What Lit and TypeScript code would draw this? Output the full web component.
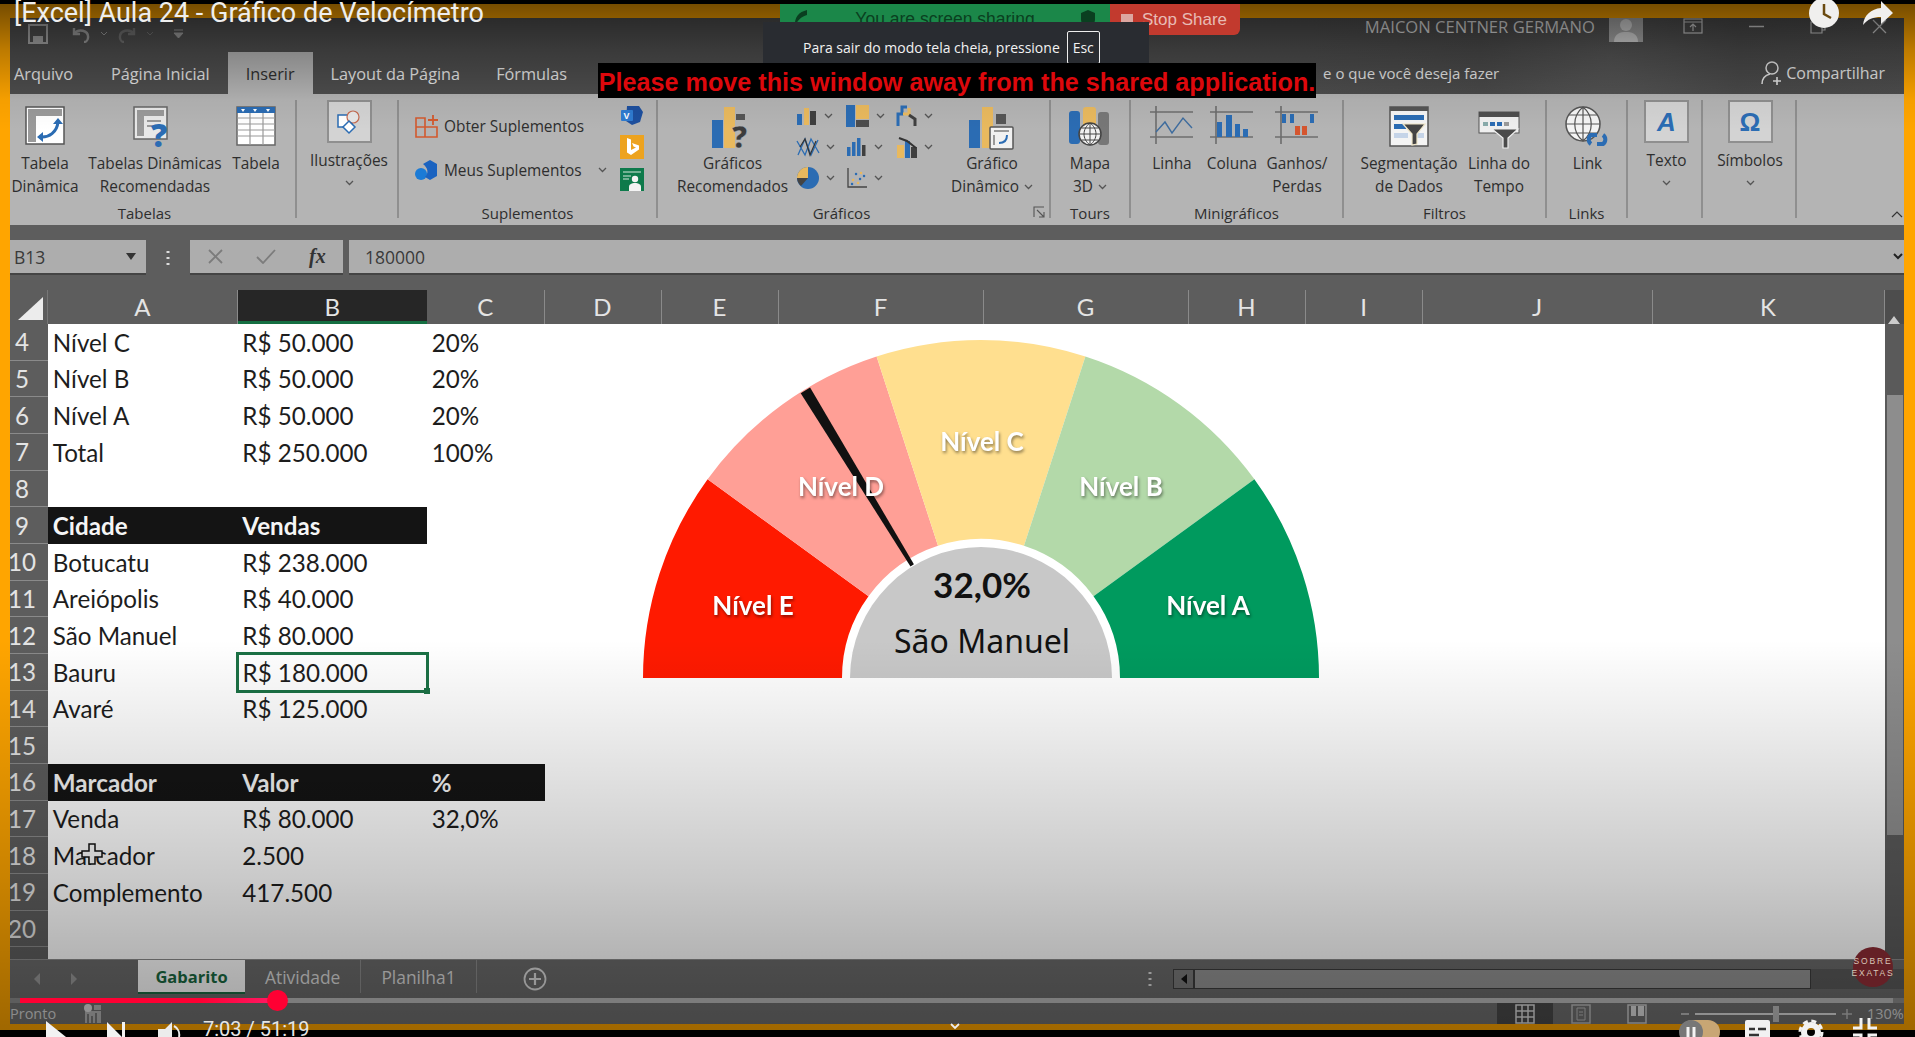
import { LitElement, html, css, svg } from "lit";
import { customElement } from "lit/decorators.js";

const BLUE = "#2b6cb3";
const YEL = "#e9b95e";

const ic = (w: number, h: number, c: unknown) =>
  html`<svg width=${w} height=${h} viewBox="0 0 ${w} ${h}" fill="none">${c}</svg>`;

const pivotIcon = ic(40, 40, svg`
  <rect x="1" y="1" width="38" height="37" fill="#fff" stroke="#555" stroke-width="1.5"/>
  <rect x="3" y="3" width="34" height="7" fill="#9a9a9a"/><rect x="3" y="3" width="8" height="33" fill="#9a9a9a"/>
  <path d="M15 31c9 1 17-5 18-15" stroke="${BLUE}" stroke-width="3"/>
  <path d="M28 18l5-6 5 6zM18 26l-6 5 6 5z" fill="${BLUE}"/>`);
const recIcon = ic(44, 44, svg`
  <rect x="1" y="1" width="33" height="32" fill="#e8e8e8" stroke="#666" stroke-width="1.5"/>
  <rect x="4" y="4" width="27" height="6" fill="#999"/><rect x="4" y="4" width="7" height="26" fill="#999"/>
  <rect x="14" y="14" width="14" height="2" fill="#999"/><rect x="14" y="19" width="14" height="2" fill="#999"/>
  <text x="18" y="41" font-family="Open Sans" font-weight="800" font-size="32" fill="${BLUE}">?</text>`);
const tableIcon = ic(40, 40, svg`
  <rect x="1" y="1" width="38" height="38" fill="#fff" stroke="#666" stroke-width="1.5"/>
  <rect x="1" y="1" width="38" height="6" fill="${BLUE}"/>
  <path d="M5 3h4l-2 3zM17 3h4l-2 3zM30 3h4l-2 3z" fill="#fff"/>
  <path d="M1 12h38M1 18h38M1 24h38M1 30h38M14 7v32M27 7v32" stroke="#9a9a9a" stroke-width="1.2"/>`);
const illusIcon = ic(26, 26, svg`
  <rect x="2" y="6" width="14" height="12" fill="#fff" stroke="${BLUE}" stroke-width="1.5"/>
  <circle cx="17" cy="8" r="6" fill="#e6e6e6" stroke="#c46a50" stroke-width="1.2"/>
  <path d="M13 12l6 6-6 6-6-6z" fill="#fff" stroke="${BLUE}" stroke-width="1.5"/>`);
const obterIcon = ic(24, 24, svg`
  <path d="M1 4h9v9H1zM1 13h9v10H1zM10 13h12v10H10z" stroke="#d2592e" stroke-width="1.6"/>
  <path d="M18 1v10M13 6h10" stroke="#d2592e" stroke-width="1.8"/>`);
const meusIcon = ic(24, 22, svg`
  <circle cx="6" cy="15" r="6" fill="#1b7bd6"/><path d="M8 5l7-4 7 4v12l-7 4-5-3c4-4 3-9-2-13z" fill="#1b63c0"/>`);
const visioIcon = ic(24, 22, svg`
  <path d="M7 2h12l4 6-3 10-8 3-6-4z" fill="#1d4f9e"/><rect x="1" y="6" width="12" height="11" rx="1" fill="#2f7bd0"/>
  <text x="3.5" y="15" font-family="Liberation Sans" font-weight="700" font-size="9" fill="#fff">V</text>`);
const bingIcon = ic(24, 24, svg`
  <rect width="24" height="24" fill="#eda31f"/><path d="M7 3l4 1.5V15l5-2.5-2.5-1-1.5-3.5 7 2.5v4L11 20l-4-2.5z" fill="#fff"/>`);
const peopleIcon = ic(24, 23, svg`
  <rect width="24" height="23" fill="#0e7a4b"/><path d="M3 4h18M3 8h8M3 11h6" stroke="#d6e6dc" stroke-width="1.2"/>
  <circle cx="15" cy="11" r="3.2" fill="#f3f3f3"/><path d="M9 23v-4c0-3 3-4 6-4s6 1 6 4v4z" fill="#f3f3f3"/>`);
const recChartIcon = ic(42, 44, svg`
  <rect x="0" y="14" width="11" height="28" fill="${BLUE}"/><rect x="12" y="1" width="11" height="41" fill="${YEL}"/>
  <rect x="24" y="8" width="9" height="6" fill="#555"/>
  <text x="20" y="42" font-family="Open Sans" font-weight="800" font-size="30" fill="#3c3c3c" stroke="#bbb" stroke-width=".4">?</text>`);
const pivotChartIcon = ic(46, 44, svg`
  <rect x="0" y="14" width="11" height="28" fill="${BLUE}"/><rect x="13" y="1" width="11" height="41" fill="${YEL}"/>
  <rect x="27" y="8" width="10" height="10" fill="#555"/>
  <rect x="21" y="21" width="23" height="22" rx="1" fill="#f1f1f1" stroke="#555" stroke-width="1.5"/>
  <path d="M25 25h15M25 29v10" stroke="#999" stroke-width="2"/><path d="M30 37c5 0 8-3 8-8" stroke="${BLUE}" stroke-width="2"/>`);
const chartSmall = [
  ic(22, 22, svg`<rect x="1" y="9" width="5" height="11" fill="${BLUE}"/><rect x="8" y="3" width="5" height="17" fill="${YEL}"/><rect x="14" y="6" width="6" height="14" fill="#3f3f3f"/>`),
  ic(24, 24, svg`<rect x="0" y="1" width="9" height="22" fill="${BLUE}"/><rect x="10" y="1" width="13" height="14" fill="${YEL}"/><rect x="10" y="16" width="13" height="7" fill="#4d4d4d"/>`),
  ic(22, 22, svg`<path d="M2 21V9h4V2h5" stroke="${BLUE}" stroke-width="3"/><path d="M7 9h6V3" stroke="${YEL}" stroke-width="3"/><path d="M13 10l6 4v7" stroke="#3f3f3f" stroke-width="3"/>`),
  ic(24, 24, svg`<path d="M1 6l8 14 6-16 8 14M2 20L9 4l6 16 7-15" stroke="${BLUE}" stroke-width="1.3"/><path d="M4 12l5-8 5 16 6-14" stroke="#333" stroke-width="1.2"/>`),
  ic(22, 22, svg`<rect x="1" y="11" width="3.5" height="9" fill="${BLUE}"/><rect x="6" y="6" width="3.5" height="14" fill="${BLUE}"/><rect x="11" y="2" width="3.5" height="18" fill="${BLUE}"/><rect x="16" y="9" width="3.5" height="11" fill="#3f3f3f"/>`),
  ic(22, 24, svg`<rect x="1" y="10" width="7" height="13" fill="${YEL}"/><rect x="9" y="6" width="5" height="17" fill="${BLUE}"/><rect x="15" y="12" width="6" height="11" fill="#3f3f3f"/><path d="M3 3l8 3 9 7" stroke="#333" stroke-width="2"/>`),
  ic(24, 24, svg`<circle cx="12" cy="12" r="11" fill="${BLUE}"/><path d="M12 12V1A11 11 0 0 0 1 12z" fill="${YEL}"/><path d="M12 12H1a11 11 0 0 0 4 8z" fill="#444"/>`),
  ic(22, 22, svg`<path d="M2 1v19h19" stroke="#444" stroke-width="1.3"/><path d="M6 17h.1M10 7h.1M14 12h.1M18 9h.1" stroke="${BLUE}" stroke-width="2.4" stroke-linecap="round"/><path d="M7 13h.1M12 16h.1M15 6h.1" stroke="${YEL}" stroke-width="2.4" stroke-linecap="round"/>`),
];
const mapIcon = ic(44, 42, svg`
  <rect x="1" y="5" width="11" height="33" rx="3" fill="${BLUE}"/><rect x="15" y="1" width="13" height="22" rx="3" fill="${YEL}"/>
  <rect x="30" y="6" width="11" height="33" rx="3" fill="#777"/>
  <circle cx="22" cy="28" r="11" fill="#f1f1f1" stroke="#444" stroke-width="1.5"/>
  <path d="M11 28h22M22 17v22M14 22h16M14 34h16M22 17c-8 6-8 16 0 22M22 17c8 6 8 16 0 22" stroke="#444" stroke-width="1"/>`);
const spark = (c: unknown) => ic(44, 40, svg`<path d="M0 6h43M0 31h43M6 0v38" stroke="#6d6d6d" stroke-width="1.6"/>${c}`);
const lineIcon = spark(svg`<path d="M6 26l9-10 7 11 11-15 9 10" stroke="#3e6c9e" stroke-width="1.4"/>`);
const colIcon = spark(svg`<rect x="7" y="16" width="5" height="15" fill="${BLUE}"/><rect x="16" y="9" width="6" height="22" fill="${BLUE}"/><rect x="25" y="18" width="5" height="13" fill="${BLUE}"/><rect x="33" y="23" width="5" height="8" fill="${BLUE}"/>`);
const winIcon = spark(svg`<rect x="7" y="8" width="4" height="9" fill="${BLUE}"/><rect x="15" y="8" width="4" height="9" fill="${BLUE}"/><rect x="20" y="20" width="5" height="9" fill="#d5552e"/><rect x="27" y="20" width="5" height="9" fill="#d5552e"/><rect x="35" y="8" width="4" height="9" fill="${BLUE}"/>`);
const slicerIcon = ic(40, 42, svg`
  <rect x="1" y="1" width="38" height="39" fill="#f4f4f4" stroke="#555" stroke-width="1.5"/><rect x="1" y="1" width="38" height="4" fill="#555"/>
  <rect x="5" y="9" width="30" height="5" fill="${BLUE}"/><rect x="5" y="18" width="12" height="5" fill="${BLUE}"/>
  <rect x="5" y="27" width="14" height="5" fill="#c5d4e8"/><rect x="26" y="27" width="9" height="5" fill="#c5d4e8"/>
  <path d="M14 18h22l-8 10v10l-5 1V28z" fill="#444" stroke="#efe6c8" stroke-width="1.2"/>`);
const timeIcon = ic(42, 43, svg`
  <g transform="translate(0 5)"><rect x="1" y="1" width="40" height="21" fill="#efefef" stroke="#555"/><rect x="1" y="1" width="40" height="5" fill="#4e4e4e"/>
  <rect x="5" y="11" width="5" height="4" fill="#8aa"/><rect x="12" y="11" width="5" height="4" fill="${BLUE}"/><rect x="19" y="11" width="5" height="4" fill="${BLUE}"/><rect x="26" y="11" width="5" height="4" fill="#999"/>
  <path d="M14 18h26l-10 9v10h-5V27z" fill="#4a4a4a" stroke="#eee" stroke-width="1.2"/></g>`);
const linkIcon = ic(46, 46, svg`
  <circle cx="18" cy="18" r="17" fill="#f4f4f4" stroke="#555" stroke-width="1.5"/>
  <path d="M1 18h34M18 1v34M4 9h28M4 27h28M18 1c-11 9-11 25 0 34M18 1c11 9 11 25 0 34" stroke="#555" stroke-width="1.2"/>
  <path d="M26 38a5.5 5.5 0 0 1 0-9h6M38 29a5.500 5.500 0 0 1 0 9h-6" stroke="${BLUE}" stroke-width="4"/>`);
const chev = html`<svg class="chev" width="9" height="6" viewBox="0 0 9 6" fill="none"><path d="M1 1l3.5 3.500L8 1" stroke="#555" stroke-width="1.3"/></svg>`;

const big = (w: number, icon: unknown, l1: string, l2 = "", caret = false) => html`
  <div class="big" style="width:${w}px"><div class="slot">${icon}</div>
    <span class="bl">${l1}</span>
    ${l2 ? html`<span class="bl">${l2}${caret ? html` ${chev}` : ""}</span>` : ""}</div>`;
const boxed = (w: number, icon: unknown, l: string) => html`
  <div class="boxed" style="width:${w}px"><div class="box">${icon}</div><span class="bl">${l}</span>${chev}</div>`;
const group = (w: number, lead: number, label: string, body: unknown, shift = 0, extra: unknown = "") => html`
  <section class="group" style="width:${w}px">
    <div class="gbody" style="padding-left:${lead}px">${body}</div>
    <div class="glabel" style="padding-right:${shift}px">${label}</div>${extra}
  </section>`;

const ROWS: [number, string, string, string, string?][] = [
  [4, "Nível C", "R$ 50.000", "20%"],
  [5, "Nível B", "R$ 50.000", "20%"],
  [6, "Nível A", "R$ 50.000", "20%"],
  [7, "Total", "R$ 250.000", "100%"],
  [8, "", "", ""],
  [9, "Cidade", "Vendas", "", "h2"],
  [10, "Botucatu", "R$ 238.000", ""],
  [11, "Areiópolis", "R$ 40.000", ""],
  [12, "São Manuel", "R$ 80.000", ""],
  [13, "Bauru", "R$ 180.000", "", "sel"],
  [14, "Avaré", "R$ 125.000", ""],
  [15, "", "", ""],
  [16, "Marcador", "Valor", "%", "h3"],
  [17, "Venda", "R$ 80.000", "32,0%"],
  [18, "Marcador", "2.500", ""],
  [19, "Complemento", "417.500", ""],
  [20, "", "", ""],
  [21, "", "", ""],
];
const COLS: [string, boolean?][] = [["A"], ["B", true], ["C"], ["D"], ["E"], ["F"], ["G"], ["H"], ["I"], ["J"], ["K"]];

const CX = 351, CY = 343, R = 338, RW = 139, RG = 131;
const pt = (deg: number, r: number) => {
  const a = (deg * Math.PI) / 180;
  return `${(CX - r * Math.cos(a)).toFixed(1)} ${(CY - r * Math.sin(a)).toFixed(1)}`;
};
const wedge = (a: number, b: number) => `M${pt(a, RW)} L${pt(a, R)} A${R} ${R} 0 0 1 ${pt(b, R)} L${pt(b, RW)} A${RW} ${RW} 0 0 0 ${pt(a, RW)}Z`;
const SEG = [
  { c: "#ff1a00", t: "Nível E", x: 123, y: 280 },
  { c: "#ff9f96", t: "Nível D", x: 211, y: 161 },
  { c: "#ffdf8f", t: "Nível C", x: 352, y: 116 },
  { c: "#b3d9a9", t: "Nível B", x: 491, y: 161 },
  { c: "#009a5e", t: "Nível A", x: 578, y: 280 },
];
const needle = (() => {
  const a = (58.6 * Math.PI) / 180;
  const dx = -Math.cos(a), dy = -Math.sin(a), nx = -dy, ny = dx;
  const p = (r: number, h: number) => `${(CX + dx * r + nx * h).toFixed(1)},${(CY + dy * r + ny * h).toFixed(1)}`;
  return `${p(337, 5.5)} ${p(337, -5.5)} ${p(132, -2)} ${p(132, 2)}`;
})();

@customElement("app-root")
export class AppRoot extends LitElement {
  static styles = css`
    :host { display: block; position: relative; width: 1915px; height: 1037px; overflow: hidden; background: #000; font-family: "Open Sans", sans-serif; }
    svg { display: block; flex: none; }
    .frame { height: 1037px; box-sizing: border-box; padding: 4px 0 7px; }
    .orange { height: 100%; box-sizing: border-box; background: #ffa500; padding: 14px 11px 6px 10px; }
    .excel { height: 100%; display: flex; flex-direction: column; background: #5c5c5c; overflow: hidden; }

    .chrome { height: 76px; flex: none; background: radial-gradient(circle at 1600px 40px, #565656 0, #4a4a4a 130px, #4e4e4e 300px); display: flex; flex-direction: column; color: #e8e8e8; }
    .qat { height: 34px; flex: none; display: flex; align-items: flex-start; }
    .qatl { display: flex; align-items: center; gap: 8px; padding-left: 17px; opacity: .62; height: 26px; margin-top: 3px; }
    .sp5 { width: 5px; } .sp0 { width: 0; margin-left: -8px; } .sp3 { width: 3px; }
    .user { margin-left: auto; display: flex; align-items: center; height: 16px; margin-top: 0; font-size: 16.6px; color: #ddd; padding-right: 17px; }
    .avatar { margin-left: 14px; width: 34px; height: 24px; background: #a9a9a9; margin-top: 8px; }
    .win { margin-left: 40px; display: flex; align-items: center; gap: 46px; }
    .tabs { flex: 1; display: flex; align-items: stretch; font-size: 16.3px; }
    .tab { padding: 0 18px; display: flex; align-items: center; padding-top: 1px; }
    .tab.first { padding: 1px 20px 0 4px; }
    .tab.on { background: #b4b4b4; color: #2f2f2f; }
    .tell { margin-left: auto; align-self: center; font-size: 15px; margin-right: 262px; }
    .share { display: flex; align-items: center; gap: 3px; padding-right: 19px; font-size: 16px; }

    .ribbon { height: 131px; flex: none; box-sizing: border-box; background: #b4b4b4; padding: 6px 0 7px; display: flex; position: relative; color: #2e2e2e; font-size: 15.4px; }
    .group { height: 118px; box-sizing: border-box; border-right: 2px solid #8f8f8f; display: flex; flex-direction: column; flex: none; }
    .group.last { border: 0; flex: 1; }
    .gbody { display: flex; flex: 1; min-height: 0; }
    .glabel { height: 18px; line-height: 18px; margin-bottom: -4px; text-align: center; font-size: 15px; box-sizing: border-box; }
    .big { display: flex; flex-direction: column; align-items: center; flex: none; }
    .slot { height: 52px; box-sizing: border-box; flex: none; display: flex; align-items: flex-start; justify-content: center; padding-top: 6px; }
    .bl { display: flex; align-items: center; gap: 5px; height: 23px; line-height: 23px; white-space: nowrap; flex: none; }
    .boxed { display: flex; flex-direction: column; align-items: center; flex: none; }
    .box { width: 45px; height: 43px; box-sizing: border-box; background: #d3d3d3; border: 2px solid #8f8f8f; display: flex; align-items: center; justify-content: center; margin-bottom: 6px; font-family: "Liberation Sans", sans-serif; color: #2b6cb3; }
    .box b { font-size: 26px; line-height: 1; }
    .boxed .chev { margin-top: 8px; }
    .add { width: 205px; flex: none; padding-top: 4px; }
    .addrow { height: 44px; display: flex; align-items: center; gap: 5px; }
    .addrow .chev { margin-left: auto; margin-right: 13px; }
    .adds { display: flex; flex-direction: column; gap: 9px; padding-top: 4px; }
    .charts { display: grid; grid-template-columns: repeat(3, 50px); grid-auto-rows: 31px; align-items: center; flex: none; }
    .cc { display: flex; align-items: center; justify-content: flex-start; padding-left: 1px; gap: 6px; }
    .lhold { position: relative; height: 0; }
    .launch { position: absolute; right: 4px; bottom: 0; }
    .collapse { position: absolute; right: 1px; bottom: 7px; }

    .fbar { height: 65px; flex: none; box-sizing: border-box; padding: 15px 0 15px; display: flex; background: #5d5d5d; color: #3a3a3a; font-size: 17.5px; }
    .name { width: 136px; background: #adadad; display: flex; align-items: center; justify-content: space-between; padding: 0 10px 0 4px; box-sizing: border-box; border-bottom: 2px solid #444; }
    .dots { width: 44px; display: flex; align-items: center; justify-content: center; }
    .fx { width: 153px; background: #adadad; display: flex; align-items: center; box-sizing: border-box; border-bottom: 2px solid #444; padding-left: 18px; gap: 33px; }
    .input { flex: 1; margin-left: 6px; background: #adadad; display: flex; align-items: center; padding-left: 16px; border-bottom: 2px solid #444; justify-content: space-between; padding-right: 1px; }
    .fxt { font-family: "Liberation Serif", serif; font-style: italic; font-weight: 700; font-size: 20px; color: #333; }

    .colhead { height: 34px; flex: none; display: grid; grid-template-columns: 38px 189.5px 189.5px 117.5px 117px 117px 205px 205px 117px 117px 230px 232px 19px; background: #5d5d5d; }
    .corner { display: flex; align-items: flex-end; justify-content: flex-end; padding: 0 4px 4px 0; border-right: 1px solid #777; }
    .ch { display: flex; align-items: center; justify-content: center; color: #e4e4e4; font: 24px "Lato", sans-serif; border-right: 1px solid #8a8a8a; box-sizing: border-box; background: #5d5d5d; padding-bottom: 2px; }
    .ch.on { background: #262626; box-shadow: inset 0 -3px 0 #156f42; border-right: 0; }
    .up { background: #4d4d4d; display: flex; align-items: flex-end; justify-content: center; }

    .sheet { flex: 1; min-height: 0; display: flex; position: relative; overflow: hidden; background: #fff; }
    .grid { flex: 1; min-width: 0; display: flex; flex-direction: column; }
    .row { height: 36.67px; flex: none; display: grid; grid-template-columns: 38px 189.5px 189.5px 117.5px; font: 24.2px "Lato", sans-serif; color: #1d1d1d; }
    .rn { background: #5d5d5d; color: #e4e4e4; box-sizing: border-box; border-bottom: 1.5px solid #8a8a8a; display: flex; align-items: center; justify-content: center; padding-right: 14px; }
    .c { display: flex; align-items: center; padding-left: 4.8px; white-space: nowrap; box-sizing: border-box; }
    .h .c { background: #141414; color: #f5f5f5; font-weight: 700; }
    .h2 .c:nth-child(4) { background: none; }
    .sel .c:nth-child(3) { outline: 3px solid #1b7145; outline-offset: -1px; position: relative; padding-left: 5px; }
    .sel .c:nth-child(3)::after { content: ""; position: absolute; right: -3px; bottom: -3px; width: 6px; height: 6px; background: #1b7145; }
    .vs { width: 19px; flex: none; background: #5a5a5a; padding-top: 71px; box-sizing: border-box; }
    .thumb { height: 440px; background: #8d8d8d; margin: 0 1px 0 2px; }

    .gauge { position: absolute; left: 620px; top: 11px; }
    .gl { font: 700 26px "Lato", sans-serif; fill: #fff; text-anchor: middle; filter: drop-shadow(1px 2px 1.5px rgba(0,0,0,.45)); }
    .pct { font: 700 35px "Lato", sans-serif; fill: #111; text-anchor: middle; }
    .city { font: 400 32px "Noto Sans", sans-serif; fill: #111; text-anchor: middle; }
    .cursor { position: absolute; left: 71px; top: 519px; }

    .stabs { height: 39px; flex: none; display: flex; align-items: stretch; background: #6b6b6b; border-top: 1px solid #8c8c8c; box-sizing: border-box; font-size: 17.4px; color: #ddd; }
    .nav { width: 128px; display: flex; align-items: center; gap: 30px; padding-left: 24px; box-sizing: border-box; flex: none; }
    .st { display: flex; align-items: center; padding: 0 20px; height: 33px; box-sizing: border-box; border-right: 1px solid #8c8c8c; flex: none; }
    .st.on { background: #fff; color: #1a6a42; font-weight: 700; width: 107px; justify-content: center; padding: 0; border-right: 0; border-bottom: 2px solid #1a6a42; height: 34px; font-size: 16.5px; }
    .plus { margin-left: 46px; align-self: center; margin-top: -1px; }
    .sdots { margin-left: auto; align-self: center; margin-right: 21px; }
    .hs { width: 731px; height: 20px; align-self: center; display: flex; background: #5a5a5a; flex: none; }
    .hb { width: 21px; background: #7b7b7b; border: 1px solid #3d3d3d; box-sizing: border-box; display: flex; align-items: center; justify-content: center; }
    .ht { width: 617px; background: #959595; border: 1px solid #3d3d3d; box-sizing: border-box; }

    .status { height: 26px; flex: none; display: flex; align-items: center; background: #707070; border-top: 5px solid #8d8d8d; box-sizing: border-box; color: #d8d8d8; font-size: 14.5px; }
    .views { margin-left: auto; display: flex; align-items: stretch; height: 100%; }
    .view { width: 56px; display: flex; align-items: center; justify-content: center; }
    .view.on { background: #4a4a4a; }
    .zoom { display: flex; align-items: center; gap: 4px; margin-left: 16px; width: 223px; overflow: hidden; flex: none; }
    .zl { width: 141px; height: 2px; background: #ddd; position: relative; margin: 0 2px; flex: none; }
    .zl::after { content: ""; position: absolute; left: 78px; top: -7px; width: 6px; height: 16px; background: #bdbdbd; }
    .pc { margin-left: 11px; font-size: 14.5px; white-space: nowrap; }

    .shade { position: absolute; inset: 0; pointer-events: none; background:
      linear-gradient(to bottom, rgba(0,0,0,0) 640px, rgba(0,0,0,.21) 880px, rgba(0,0,0,.38) 1037px),
      linear-gradient(to bottom, rgba(0,0,0,.56) 0, rgba(0,0,0,.26) 50px, rgba(0,0,0,.04) 100px, rgba(0,0,0,0) 130px); }

    .title { position: absolute; left: 14px; top: -3px; font: 400 27px "Roboto", sans-serif; color: #eeeeee; white-space: nowrap; }
    .zoomshare { position: absolute; left: 780px; top: 4px; height: 31px; width: 330px; background: #1b8749; border-radius: 0 0 4px 4px; font: 17.5px "Liberation Sans", sans-serif; color: #0a3f20; display: flex; justify-content: space-between; padding: 5px 14px 0 12px; box-sizing: border-box; }
    .stop { position: absolute; left: 1110px; top: 4px; height: 31px; width: 130px; background: #c23a2e; border-radius: 0 0 6px 0; color: #e8bcb5; font: 17px "Liberation Sans", sans-serif; display: flex; align-items: center; gap: 9px; padding-left: 11px; box-sizing: border-box; }
    .stop i { width: 12px; height: 12px; background: #dca6a0; }
    .toast { position: absolute; left: 763px; top: 22px; width: 386px; height: 50px; background: #292c31; color: #f2f2f2; font: 14px "Open Sans", sans-serif; display: flex; align-items: center; padding-left: 40px; box-sizing: border-box; gap: 7px; white-space: nowrap; }
    .esc { border: 1px solid #eee; border-radius: 2px; height: 33px; width: 33px; box-sizing: border-box; display: flex; align-items: center; justify-content: center; font-size: 14px; }
    .banner { position: absolute; left: 598px; top: 63px; width: 718px; height: 35px; background: #000; color: #dd080c; font: 700 25.2px "Liberation Sans", sans-serif; display: flex; align-items: center; justify-content: center; white-space: nowrap; padding-top: 3px; box-sizing: border-box; }
    .logo { position: absolute; left: 1853px; top: 947px; width: 40px; height: 40px; border-radius: 50%; background: #652026; color: #d8c6b8; font: 8.5px "Liberation Sans", sans-serif; letter-spacing: 1.8px; display: flex; flex-direction: column; align-items: center; justify-content: center; line-height: 12px; }
    .progress { position: absolute; left: 20px; top: 998px; height: 5px; width: 1873px; display: flex; }
    .pf { width: 257px; background: linear-gradient(to right, #ff0033 70%, #ff1a66); }
    .pr { flex: 1; background: #8a8a8a; opacity: .7; }
    .knob { position: absolute; left: 267px; top: 990px; width: 21px; height: 21px; border-radius: 50%; background: #ff0033; }
    .controls { position: absolute; left: 0; top: 1017px; }
    .time { position: absolute; left: 203px; top: 1017px; font: 20px "Roboto", sans-serif; color: #e6e6e6; white-space: nowrap; }
    .ttop { position: absolute; left: 1490px; top: 0; }
  `;

  render() {
    return html`
      <div class="frame"><div class="orange"><div class="excel">
        <div class="chrome">
          <div class="qat">
            <div class="qatl">
              ${ic(22, 22, svg`<path d="M2 2h18v18H2z" stroke="#ddd" stroke-width="2"/><rect x="6" y="13" width="10" height="7" fill="#ddd"/>`)}
              <span class="sp5"></span>
              ${ic(22, 18, svg`<path d="M4 3v6h6M4 9c4-6 15-4 14 4-.2 2-2 4-4 4" stroke="#ccc" stroke-width="2.4"/>`)}
              ${ic(8, 6, svg`<path d="M1 1l3 3 3-3" stroke="#ccc"/>`)}
              <span class="sp0"></span>
              ${ic(22, 18, svg`<path d="M18 3v6h-6M18 9c-4-6-15-4-14 4 .2 2 2 4 4 4" stroke="#888" stroke-width="2.4"/>`)}
              ${ic(8, 6, svg`<path d="M1 1l3 3 3-3" stroke="#888"/>`)}
              <span class="sp3"></span>
              ${ic(12, 10, svg`<path d="M1 1h9M1 4l4.500 5L10 4z" stroke="#ccc" fill="#ccc"/>`)}
            </div>
            <div class="user">
              MAICON CENTNER GERMANO
              <div class="avatar">${ic(34, 24, svg`<circle cx="17" cy="7" r="6" fill="#d9d9d9"/><path d="M5 24c0-9 7-10 12-10s12 1 12 10z" fill="#d9d9d9"/>`)}</div>
              <div class="win">
                ${ic(20, 16, svg`<rect x="1" y="1" width="18" height="14" stroke="#ccc" stroke-width="1.200"/><path d="M1 4h18M10 13V7M7 9l3-3 3 3" stroke="#ccc" stroke-width="1.200"/>`)}
                ${ic(15, 3, svg`<path d="M0 1.500h15" stroke="#ccc" stroke-width="1.500"/>`)}
                ${ic(16, 16, svg`<path d="M1 4h11v11H1zM4 4V1h11v11h-3" stroke="#ccc" stroke-width="1.200"/>`)}
                ${ic(15, 15, svg`<path d="M1 1l13 13M14 1L1 14" stroke="#ccc" stroke-width="1.300"/>`)}
              </div>
            </div>
          </div>
          <div class="tabs">
            <div class="tab first">Arquivo</div>
            <div class="tab">Página Inicial</div>
            <div class="tab on">Inserir</div>
            <div class="tab">Layout da Página</div>
            <div class="tab">Fórmulas</div>
            <div class="tell">e o que você deseja fazer</div>
            <div class="share">
              ${ic(22, 26, svg`<circle cx="11" cy="8" r="6" stroke="#e6e6e6" stroke-width="1.500"/><path d="M1 24c0-6 4-9 8-10" stroke="#e6e6e6" stroke-width="1.500"/><path d="M16 17v8M12 21h8" stroke="#e6e6e6" stroke-width="1.600"/>`)}
              Compartilhar
            </div>
          </div>
        </div>

        <div class="ribbon">
          ${group(287, 0, "Tabelas", html`
            ${big(70, pivotIcon, "Tabela", "Dinâmica")}
            ${big(150, recIcon, "Tabelas Dinâmicas", "Recomendadas")}
            ${big(52, tableIcon, "Tabela")}`, 16)}
          ${group(102, 12, "", boxed(80, illusIcon, "Ilustrações"))}
          ${group(259, 16, "Suplementos", html`
            <div class="add">
              <div class="addrow">${obterIcon}<span>Obter Suplementos</span></div>
              <div class="addrow">${meusIcon}<span>Meus Suplementos</span>${chev}</div>
            </div>
            <div class="adds">${visioIcon}${bingIcon}${peopleIcon}</div>`)}
          ${group(393, 12, "Gráficos", html`
            ${big(125, recChartIcon, "Gráficos", "Recomendados")}
            <div class="charts">
              ${chartSmall.map((c) => html`<div class="cc">${c}${chev}</div>`)}
            </div>
            ${big(94, pivotChartIcon, "Gráfico", "Dinâmico", true)}`, 24, html`
            <div class="lhold">
              <div class="launch">${ic(12, 12, svg`<path d="M1 11V1h10M4 4l7 7M11 6v5H6" stroke="#555" stroke-width="1.100"/>`)}</div>
            </div>`)}
          ${group(80, 0, "Tours", big(78, mapIcon, "Mapa", "3D", true))}
          ${group(213, 11, "Minigráficos", html`
            ${big(60, lineIcon, "Linha")}${big(60, colIcon, "Coluna")}${big(70, winIcon, "Ganhos/", "Perdas")}`)}
          ${group(203, 5, "Filtros", html`
            ${big(120, slicerIcon, "Segmentação", "de Dados")}${big(60, timeIcon, "Linha do", "Tempo")}`)}
          ${group(81, 1, "Links", big(79, linkIcon, "Link"))}
          ${group(75, 4, "", boxed(69, html`<b><i>A</i></b>`, "Texto"))}
          ${group(94, 2, "", boxed(90, html`<b>Ω</b>`, "Símbolos"))}
          <section class="group last"></section>
          <div class="collapse">${ic(12, 8, svg`<path d="M1 7l5-5 5 5" stroke="#333" stroke-width="1.200"/>`)}</div>
        </div>

        <div class="fbar">
          <div class="name"><span>B13</span>${ic(10, 7, svg`<path d="M0 0h10L5 7z" fill="#333"/>`)}</div>
          <div class="dots">${ic(4, 16, svg`<path d="M2 1v2M2 7v2M2 13v2" stroke="#ddd" stroke-width="3"/>`)}</div>
          <div class="fx">
            ${ic(15, 15, svg`<path d="M1 1l13 13M14 1L1 14" stroke="#7c7c7c" stroke-width="1.800"/>`)}
            ${ic(20, 15, svg`<path d="M1 8l6 6L19 1" stroke="#7c7c7c" stroke-width="1.800"/>`)}
            <span class="fxt">fx</span>
          </div>
          <div class="input"><span>180000</span>${ic(10, 7, svg`<path d="M1 1l4 4 4-4" stroke="#222" stroke-width="2"/>`)}</div>
        </div>

        <div class="colhead">
          <div class="corner">${ic(25, 23, svg`<path d="M25 0v23H0z" fill="#ececec"/>`)}</div>
          ${COLS.map(([c, on]) => html`<div class="ch ${on ? "on" : ""}">${c}</div>`)}
          <div class="up">${ic(12, 8, svg`<path d="M6 0l6 8H0z" fill="#ccc"/>`)}</div>
        </div>

        <div class="sheet">
          <div class="grid">
            ${ROWS.map(([n, a, b, c, k]) => html`
              <div class="row ${k === "h2" || k === "h3" ? "h" : ""} ${k ?? ""}">
                <div class="rn">${n === 21 ? "" : n}</div>
                <div class="c">${a}</div><div class="c">${b}</div><div class="c">${c}</div>
              </div>`)}
          </div>
          <div class="vs"><div class="thumb"></div></div>
          <svg class="gauge" width="702" height="350" viewBox="0 0 702 350">
            ${SEG.map((s, i) => svg`<path d=${wedge(i * 36, (i + 1) * 36)} fill=${s.c}/>`)}
            <path d="M${CX - RG} ${CY} A${RG} ${RG} 0 0 1 ${CX + RG} ${CY}Z" fill="#c8c8c8"/>
            <polygon points=${needle} fill="#111"/>
            ${SEG.map((s) => svg`<text class="gl" x=${s.x} y=${s.y}>${s.t}</text>`)}
            <text class="pct" x="352" y="263">32,0%</text>
            <text class="city" x="352" y="318">São Manuel</text>
          </svg>
          <div class="cursor">${ic(22, 22, svg`<path d="M8 1h6v7h7v6h-7v7H8v-7H1V8h7z" fill="#fff" stroke="#111" stroke-width="1.500"/>`)}</div>
        </div>

        <div class="stabs">
          <div class="nav">
            ${ic(7, 12, svg`<path d="M6 0v12L0 6z" fill="#999"/>`)}
            ${ic(7, 12, svg`<path d="M0 0v12l6-6z" fill="#999"/>`)}
          </div>
          <div class="st on">Gabarito</div>
          <div class="st">Atividade</div>
          <div class="st">Planilha1</div>
          <div class="plus">${ic(24, 24, svg`<circle cx="12" cy="12" r="10.500" stroke="#ddd" stroke-width="1.800"/><path d="M12 6v12M6 12h12" stroke="#ddd" stroke-width="2.200"/>`)}</div>
          <div class="sdots">${ic(4, 16, svg`<path d="M2 1v2M2 7v2M2 13v2" stroke="#ddd" stroke-width="3"/>`)}</div>
          <div class="hs">
            <div class="hb">${ic(6, 10, svg`<path d="M6 0v10L0 5z" fill="#111"/>`)}</div>
            <div class="ht"></div>
          </div>
        </div>

        <div class="status">
          <span>Pronto</span>
          ${ic(46, 20, svg`<rect x="29" y="7" width="16" height="12" fill="#b5b5b5"/><path d="M32 10v9M36 12v7M40 9v10" stroke="#666" stroke-width="1.500"/><circle cx="32" cy="4" r="4" fill="#e0e0e0"/><rect x="38" y="1" width="7" height="5" fill="#b5b5b5"/>`)}
          <div class="views">
            <div class="view on">${ic(20, 20, svg`<path d="M1 1h18v18H1zM1 7h18M1 13h18M7 1v18M13 1v18" stroke="#ddd" stroke-width="1.500"/>`)}</div>
            <div class="view">${ic(20, 20, svg`<path d="M1 1h18v18H1z" stroke="#bbb" stroke-width="1.500"/><path d="M6 4h8v12H6zM8 8h4M8 11h4" stroke="#bbb"/>`)}</div>
            <div class="view">${ic(20, 20, svg`<path d="M1 1h18v18H1z" stroke="#ccc" stroke-width="1.500"/><rect x="4" y="2" width="5" height="10" fill="#ddd"/><rect x="11" y="2" width="6" height="10" fill="#ddd"/>`)}</div>
          </div>
          <div class="zoom">
            ${ic(8, 2, svg`<path d="M0 1h8" stroke="#bbb" stroke-width="2"/>`)}
            <div class="zl"></div>
            ${ic(10, 10, svg`<path d="M0 5h10M5 0v10" stroke="#bbb" stroke-width="1.500"/>`)}
            <span class="pc">130%</span>
          </div>
        </div>
      </div></div></div>

      <div class="shade"></div>

      <div class="zoomshare">
        ${ic(18, 20, svg`<path d="M15 1c-8 2-13 7-12 17 2-7 6-10 12-12z" fill="#0a3f20"/>`)}
        <span>You are screen sharing</span>
        ${ic(16, 20, svg`<path d="M8 1l7 3v6c0 5-3 8-7 9-4-1-7-4-7-9V4z" fill="#0a3f20"/>`)}
      </div>
      <div class="stop"><i></i>Stop Share</div>
      <div class="toast">Para sair do modo tela cheia, pressione <span class="esc">Esc</span></div>
      <div class="banner">Please move this window away from the shared application.</div>
      <div class="title">[Excel] Aula 24 - Gráfico de Velocímetro</div>
      <svg class="ttop" width="425" height="40" viewBox="0 0 425 40">
        <circle cx="334" cy="13" r="15" fill="#f0efee"/><path d="M334 4v10l7 4" stroke="#6b4a10" stroke-width="2.500" fill="none"/>
        <path d="M403 13L391 1v7c-10 1-17 7-18 17 5-6 10-8 18-8v7z" fill="#f0efee"/>
      </svg>
      <div class="logo"><span>SOBRE</span><span>EXATAS</span></div>
      <div class="progress"><div class="pf"></div><div class="pr"></div></div>
      <div class="knob"></div>
      <svg class="controls" width="1915" height="20" viewBox="0 1017 1915 20">
        <path d="M46 1021l20 16h-20z" fill="#f2f2f2"/>
        <path d="M107 1022l15 15h-15zM122 1022h3v15h-3z" fill="#f2f2f2"/>
        <path d="M158 1029h7l7-7v15h-14z" fill="#ececec"/><path d="M174 1026a10 10 0 0 1 5 11" stroke="#ececec" stroke-width="2" fill="none"/>
        <path d="M951 1024l4 4 4-4" stroke="#eee" stroke-width="1.800" fill="none"/>
        <rect x="1680" y="1020" width="40" height="24" rx="12" fill="#c8a674"/>
        <circle cx="1691" cy="1032" r="12" fill="#777"/><path d="M1688 1027v11M1694 1027v11" stroke="#f4f4f4" stroke-width="3"/>
        <rect x="1745" y="1020" width="25" height="22" rx="2" fill="#f2f2f2"/><path d="M1749 1029h6M1758 1029h8M1749 1035h10" stroke="#333" stroke-width="2.500"/>
        <circle cx="1811" cy="1032" r="7" fill="none" stroke="#f2f2f2" stroke-width="6"/><circle cx="1811" cy="1032" r="11" fill="none" stroke="#f2f2f2" stroke-width="3" stroke-dasharray="5 3.640"/>
        <path d="M1853 1028h8v-10M1877 1028h-8v-10M1853 1035h8v5M1877 1035h-8v5" stroke="#f2f2f2" stroke-width="3" fill="none"/>
      </svg>
      <div class="time">7:03 / 51:19</div>
    `;
  }
}
